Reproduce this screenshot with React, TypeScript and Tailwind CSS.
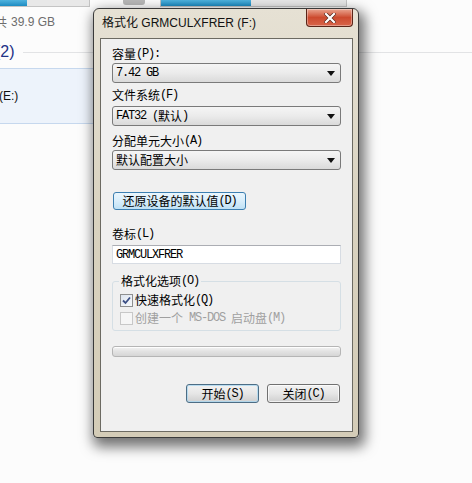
import React from "react";

const CJK = /([\u3000-\u303f\u4e00-\u9fff\uff00-\uffef]+)/;

function M({ t }: { t: string }) {
  const parts = t.split(CJK).filter((s) => s.length > 0);
  return (
    <>
      {parts.map((s, i) =>
        CJK.test(s) ? (
          <span key={i} className="font-['Noto_Sans_CJK_SC',sans-serif] text-[12px]">
            {s}
          </span>
        ) : (
          <span
            key={i}
            className="font-['Liberation_Mono',monospace] text-[12px] tracking-[-1.2px] whitespace-pre"
          >
            {s}
          </span>
        )
      )}
    </>
  );
}

function Label({ t }: { t: string }) {
  return (
    <div className="h-[14px] leading-[14px] text-[#000] flex items-center whitespace-nowrap">
      <M t={t} />
    </div>
  );
}

function Select({ t, mt }: { t: string; mt: string }) {
  return (
    <div
      className={`${mt} h-[20px] rounded-[3px] border border-[#7a7a7a] bg-gradient-to-b from-[#f5f5f5] via-[#ebebeb] to-[#dadada] flex items-center pl-[3px] pr-[5px] leading-[14px] text-black`}
    >
      <div className="flex-1 flex items-center whitespace-nowrap">
        <M t={t} />
      </div>
      <svg width="8" height="5" viewBox="0 0 8 5">
        <path d="M0 0 H8 L4 5 Z" fill="#111" />
      </svg>
    </div>
  );
}

function Checkbox({ checked, disabled }: { checked?: boolean; disabled?: boolean }) {
  return (
    <div
      className={
        disabled
          ? "w-[13px] h-[13px] border border-[#c8c8c8] bg-[#f6f6f6]"
          : "w-[13px] h-[13px] border border-[#8e8f8f] bg-gradient-to-br from-[#dde4ee] to-[#f7f9fb] flex items-center justify-center"
      }
    >
      {checked && (
        <svg width="9" height="9" viewBox="0 0 9 9">
          <path d="M1 4.5 L3.5 7 L8 1.5" stroke="#3b4f85" strokeWidth="1.8" fill="none" />
        </svg>
      )}
    </div>
  );
}

export default function App() {
  return (
    <div className="relative w-[472px] h-[483px] overflow-hidden bg-[#fcfcfc] font-['Liberation_Sans','Noto_Sans_CJK_SC',sans-serif]">
      {/* Background explorer */}
      <div className="flex flex-col">
        <div className="flex h-[8px] items-start">
          <div className="w-[90px] h-[7px] border-b border-r border-[#c4c4c4] bg-[#e8e8e8] flex">
            <div className="w-[27px] h-full bg-gradient-to-b from-[#4fb3de] to-[#1a8cc2]" />
          </div>
          <div className="ml-[33px] w-[22px] h-[5px] rounded-b-[3px] bg-[#b8b8b8]" />
          <div className="ml-[15px] w-[187px] h-[7px] border-b border-x border-[#c4c4c4] bg-[#e8e8e8] flex">
            <div className="w-[90px] h-full bg-gradient-to-b from-[#4fb3de] to-[#1a8cc2]" />
          </div>
        </div>
        <div className="mt-[7px] h-[14px] flex items-center -ml-[5px] text-[12px] text-[#6d6d6d] leading-[14px] whitespace-nowrap">
          <span className="font-['Noto_Sans_CJK_SC',sans-serif]">共</span>
          <span className="ml-[4px]">39.9 GB</span>
        </div>
        <div className="mt-[15px] h-[16px] flex items-center">
          <span className="-ml-[5px] text-[16px] leading-[16px] text-[#1e3287] whitespace-nowrap">(2)</span>
          <div className="flex-1 ml-[8px] h-px bg-[#e2e3e5]" />
        </div>
        <div className="mt-[8px] w-[220px] h-[56px] border-y border-[#c6d8ee] bg-[#edf3fb] flex items-center">
          <span className="-ml-[1px] text-[12px] text-[#111] leading-[14px]">(E:)</span>
        </div>
      </div>

      {/* Dialog window */}
      <div className="absolute left-[93px] top-[8px] w-[266px] h-[430px] flex flex-col rounded-t-[6px] rounded-b-[4px] border border-[#3a3a3a] bg-gradient-to-b from-[#e6e1d4] via-[#d9d2bf] to-[#d4ccb7] shadow-[3px_6px_13px_3px_rgba(0,0,0,0.55)]">
        <div className="h-[29px] flex items-start shrink-0">
          <div className="flex-1 pl-[8px] pt-[6px] h-[14px] leading-[14px] text-[12px] text-[#111] whitespace-nowrap">
            <span className="font-['Noto_Sans_CJK_SC',sans-serif]">格式化</span> GRMCULXFRER (F:)
          </div>
          <div className="mr-[5px] w-[47px] h-[18px] rounded-b-[4px] border border-t-0 border-[#5a2518] bg-gradient-to-b from-[#e9a590] via-[#cc4a2e] to-[#d8654a] flex items-center justify-center shadow-[inset_0_0_0_1px_rgba(255,255,255,0.35)]">
            <svg width="12" height="10" viewBox="0 0 12 10">
              <path d="M2 1 L10 9 M10 1 L2 9" stroke="#5a2a20" strokeWidth="3.6" strokeLinecap="square" />
              <path d="M2 1 L10 9 M10 1 L2 9" stroke="#ffffff" strokeWidth="2.2" strokeLinecap="square" />
            </svg>
          </div>
        </div>
        <div className="ml-[6px] mr-[5px] h-[394px] border border-[#6c6a62] bg-[#f0f0f0] flex flex-col px-[11px] pt-[8px]">
          <Label t="容量(P):" />
          <Select mt="mt-[2px]" t="7.42 GB" />
          <div className="mt-[5px]">
            <Label t="文件系统(F)" />
          </div>
          <Select mt="mt-[4px]" t="FAT32 (默认)" />
          <div className="mt-[8px]">
            <Label t="分配单元大小(A)" />
          </div>
          <Select mt="mt-[2px]" t="默认配置大小" />
          <div className="mt-[22px] ml-[1px] w-[133px] h-[18px] rounded-[3px] border border-[#3c7fb1] bg-gradient-to-b from-[#eaf6fd] via-[#d9eefb] to-[#bfe1f5] flex items-center justify-center leading-[14px] text-black whitespace-nowrap">
            <M t="还原设备的默认值(D)" />
          </div>
          <div className="mt-[17px]">
            <Label t="卷标(L)" />
          </div>
          <div className="mt-[4px] h-[19px] border border-[#d7dce3] border-t-[#abadb3] bg-white flex items-center pl-[3px] leading-[14px] text-black">
            <M t="GRMCULXFRER" />
          </div>
          <div className="mt-[17px] h-[50px] relative rounded-[3px] border border-[#d5dfe5] flex flex-col pl-[7px] pt-[10px]">
            <div className="absolute -top-[8px] left-[6px] px-[2px] bg-[#f0f0f0] h-[14px] leading-[14px] flex items-center text-black whitespace-nowrap">
              <M t="格式化选项(O)" />
            </div>
            <div className="h-[16px] flex items-center leading-[14px] text-black whitespace-nowrap">
              <Checkbox checked />
              <div className="ml-[2px] flex items-center">
                <M t="快速格式化(Q)" />
              </div>
            </div>
            <div className="mt-[2px] h-[16px] flex items-center leading-[14px] text-[#a0a0a0] whitespace-nowrap">
              <Checkbox disabled />
              <div className="ml-[2px] flex items-center">
                <M t="创建一个 MS-DOS 启动盘(M)" />
              </div>
            </div>
          </div>
          <div className="mt-[15px] h-[11px] rounded-[3px] border border-[#b5b5b5] bg-gradient-to-b from-[#f4f4f4] via-[#e2e2e2] to-[#d6d6d6] shadow-[inset_0_1px_0_rgba(255,255,255,0.9)]" />
          <div className="mt-[27px] flex justify-end gap-[8px] mr-[1px]">
            <div className="w-[73px] h-[19px] rounded-[3px] border border-[#4d6d85] bg-gradient-to-b from-[#f2f2f2] via-[#e6e6e6] to-[#cfcfcf] shadow-[inset_0_0_0_1px_rgba(170,215,240,0.8)] flex items-center justify-center leading-[14px] text-black whitespace-nowrap">
              <M t="开始(S)" />
            </div>
            <div className="w-[73px] h-[19px] rounded-[3px] border border-[#707070] bg-gradient-to-b from-[#f2f2f2] via-[#e6e6e6] to-[#cfcfcf] shadow-[inset_0_0_0_1px_rgba(255,255,255,0.7)] flex items-center justify-center leading-[14px] text-black whitespace-nowrap">
              <M t="关闭(C)" />
            </div>
          </div>
        </div>
      </div>
    </div>
  );
}
